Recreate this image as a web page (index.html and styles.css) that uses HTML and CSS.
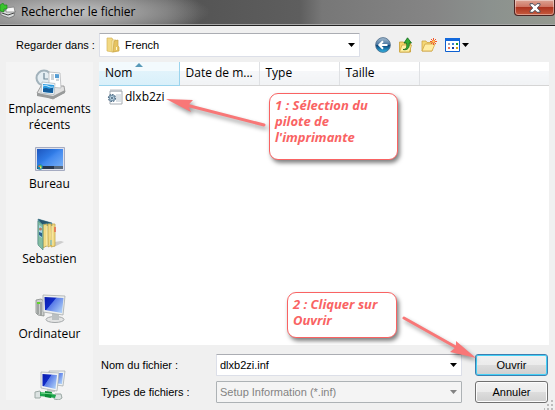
FILE: index.html
```html
<!DOCTYPE html>
<html lang="fr">
<head>
<meta charset="utf-8">
<title>Rechercher le fichier</title>
<link rel="stylesheet" href="styles.css">
</head>
<body>
<div class="dialog">
  <header class="titlebar">
    <svg class="title-icon" width="16" height="16" viewBox="0 0 16 16" aria-hidden="true">
      <path d="M1 9l5-2 9 1-1 5-5 2-8-3z" fill="#d9dcdc" stroke="#666" stroke-width=".7"/>
      <path d="M6 5l8 -1 1 5-9 0z" fill="#f7f7f7" stroke="#777" stroke-width=".7"/>
      <path d="M2 10l6 2 6-2" stroke="#444" fill="none"/>
      <path d="M0 2l3-2 1 2 3 0 0 4-3 0 0 3-4-1z" fill="#39c52c" stroke="#14801a" stroke-width=".6"/>
    </svg>
    <h1>Rechercher le fichier</h1>
    <button class="close" aria-label="Fermer">
      <svg width="12" height="10" viewBox="0 0 12 10"><path d="M1 .7h3l2 2 2-2h3v1.6L8.200 5 11 7.700v1.600H8l-2-2-2 2H1V7.700L3.800 5 1 2.300z" fill="#fff" stroke="#4b4f5c"/></svg>
    </button>
  </header>

  <div class="toolbar">
    <label for="folder">Regarder dans :</label>
    <div class="combo folder">
      <svg width="14" height="16" viewBox="0 0 14 16" aria-hidden="true">
        <path d="M1 1h5l1 2v12l-6-1z" fill="#f2d983" stroke="#d6b65b" stroke-width=".7"/>
        <path d="M6 3h4v11l-4 1z" fill="#fff3bd" stroke="#d9ba60" stroke-width=".7"/>
        <path d="M8 4l4-1v6l1 1v4l-6 1z" fill="#e6c462" stroke="#c9a446" stroke-width=".7"/>
        <path d="M10.500 10v3" stroke="#fff8d0"/>
      </svg>
      <select id="folder"><option>French</option></select>
      <svg class="caret" width="7" height="4" viewBox="0 0 7 4" aria-hidden="true"><path d="M0 0h7L3.500 4z"/></svg>
    </div>
    <nav class="tools">
      <button aria-label="Précédent">
        <svg width="16" height="16" viewBox="0 0 16 16">
          <defs><linearGradient id="orb" x1="0" y1="0" x2="0" y2="1"><stop offset="0" stop-color="#a9bfd3"/><stop offset=".48" stop-color="#47749f"/><stop offset=".52" stop-color="#0c4479"/><stop offset="1" stop-color="#32b7e8"/></linearGradient></defs>
          <circle cx="8" cy="8" r="7.400" fill="url(#orb)" stroke="#4c6b88" stroke-width=".8"/>
          <path d="M12.500 8H4.500M8 4.300L4.300 8 8 11.700" fill="none" stroke="#fff" stroke-width="2"/>
        </svg>
      </button>
      <button aria-label="Dossier parent">
        <svg width="16" height="16" viewBox="0 0 16 16">
          <path d="M1.500 5h4l1 1h6v9h-11z" fill="#f3d46c" stroke="#c69c31" stroke-width=".8"/>
          <path d="M1.500 15L4 8h9.500l-2 7z" fill="#fff0a5" stroke="#cda63e" stroke-width=".8"/>
          <path d="M5 12.500c4 0 4-3 3.500-6.500H6L9.500.8 13.500 6h-2.300c.6 5-1.700 7.500-6.200 6.500z" fill="#35ac35" stroke="#11681b" stroke-width=".8"/>
        </svg>
      </button>
      <button aria-label="Nouveau dossier">
        <svg width="16" height="16" viewBox="0 0 16 16">
          <path d="M1 4h4l1 1.500h5v8.500H1z" fill="#f4d776" stroke="#cfa545" stroke-width=".8"/>
          <path d="M1 14l3-7h10l-3 7z" fill="#ffeda4" stroke="#cfa545" stroke-width=".8"/>
          <path d="M12.500 1v7M9 4.500h7M10 2l5 5M15 2l-5 5" stroke="#f25a2b"/>
          <circle cx="12.500" cy="4.500" r="1.300" fill="#ffd15c"/>
        </svg>
      </button>
      <button class="views" aria-label="Affichage">
        <svg width="24" height="14" viewBox="0 0 24 14">
          <path d="M.5.500h14v13H.5z" fill="#fff" stroke="#0c5fd0"/><path d="M0 0h15v3H0z" fill="#1369dc"/>
          <path d="M3 5h2v2H3z" fill="#a0a0b8"/><path d="M7 5h2v2H7z" fill="#3c80d8"/><path d="M11 5h2v2h-2z" fill="#1c9a30"/>
          <path d="M3 9h2v2H3z" fill="#e97458"/><path d="M7 9h2v2H7z" fill="#173b99"/><path d="M11 9h2v2h-2z" fill="#d8a018"/>
          <path d="M17 5h7l-3.500 4z"/>
        </svg>
      </button>
    </nav>
  </div>

  <div class="body">
    <nav class="places">
      <a href="#recent">
        <svg width="32" height="32" viewBox="0 0 32 32" aria-hidden="true">
          <circle cx="10" cy="10" r="7.500" fill="#e4edf2" stroke="#a2b2bb" stroke-width="2"/>
          <path d="M10 5v6h4" fill="none" stroke="#6f8796" stroke-width="1.200"/>
          <path d="M3 25l4-7 23 0 1 6-12 7z" fill="#e1e1e1" stroke="#8c8c8c" stroke-width=".8"/>
          <path d="M3 25l16 3v3L3 28zM19 28l12-6v3l-12 6z" fill="#999b9b"/>
          <path d="M15 4l11 1 1 15-12-1z" fill="#fff" stroke="#b6b9bb" stroke-width=".8"/>
          <path d="M17 7h3M17 9h3M17 11h3M22 12h3" stroke="#9baab5"/><path d="M21 6l4 .300v4l-4-.300z" fill="#559dd4"/>
          <path d="M8 14l13 1.500-1 11L7 25z" fill="#f7fbff" stroke="#a6b1b7" stroke-width=".7"/>
          <path d="M9 16l11 1-1 8-10-1z" fill="#2b9be1"/><path d="M9 21c4-3 5 2 10-2v6l-10-1z" fill="#155d9c"/><path d="M9 18c4-2 6 2 10 1" stroke="#cfefff" fill="none"/>
        </svg>
        <span>Emplacements récents</span>
      </a>
      <a href="#bureau">
        <svg width="32" height="32" viewBox="0 0 32 32" aria-hidden="true">
          <defs><linearGradient id="desk" x1="0" y1="0" x2="1" y2="1"><stop offset="0" stop-color="#1d55bd"/><stop offset=".4" stop-color="#2f7ae5"/><stop offset=".5" stop-color="#4289ef"/><stop offset="1" stop-color="#7eb5f8"/></linearGradient></defs>
          <path d="M1.500 4.500h29v23h-29z" fill="#dce0ec" stroke="#a5abc1"/>
          <path d="M3 6h26v20H3z" fill="url(#desk)"/><path d="M3 23h26v3H3z" fill="#27374f"/><path d="M20 23h9v3h-9z" fill="#59697c"/>
          <circle cx="6" cy="24" r="2.800" fill="#1685ac"/><path d="M4.500 22.500H6V24H4.500z" fill="#ed713d"/><path d="M6 22.500h1.500V24H6z" fill="#99dc4f"/><path d="M6 24h1.500v1.500H6z" fill="#ffdf55"/>
        </svg>
        <span>Bureau</span>
      </a>
      <a href="#sebastien">
        <svg width="32" height="32" viewBox="0 0 32 32" aria-hidden="true">
          <path d="M20 29l10-5-3-1-7 1z" fill="#cdcdcd"/>
          <path d="M4 1l14 4v22L7 29l-3-3z" fill="#4d94a5" stroke="#5a899a" stroke-width=".6"/>
          <path d="M4 1l14 4-10 1z" fill="#28566d"/>
          <path d="M9 7l4-1 1 21-5 3zM14 6l3 0 1 21-4 2zM18 6l3 0v22l-4 1z" fill="#f2db83" stroke="#c3a54c" stroke-width=".8"/>
          <path d="M13 8v20M18 8v19" stroke="#fff5bd"/>
          <path d="M21 9v5" stroke="#e9684d" stroke-width="1.500"/><path d="M17 22v5" stroke="#57b5d8"/>
          <path d="M4 3l5 4v25l-5-5z" fill="#83bda2" stroke="#538e85" stroke-width=".7"/>
          <path d="M5 7l3 2v11l-3-2z" fill="#a9d8e8"/><circle cx="6.500" cy="11" r="1.500" fill="#b37d62"/><path d="M5 14l3 1v4l-3-2z" fill="#2b628d"/>
        </svg>
        <span>Sebastien</span>
      </a>
      <a href="#ordinateur">
        <svg width="32" height="32" viewBox="0 0 32 32" aria-hidden="true">
          <defs><linearGradient id="screen" x1="0" y1="0" x2="1" y2=".7"><stop offset="0" stop-color="#0a1bac"/><stop offset=".42" stop-color="#102bc6"/><stop offset=".46" stop-color="#597be7"/><stop offset="1" stop-color="#a7c9f6"/></linearGradient></defs>
          <path d="M2 7l5-1 3 2v15l-6-1-2-2z" fill="#cccfcd" stroke="#868b89" stroke-width=".8"/><path d="M4 9v12M7 9v13" stroke="#737977"/><path d="M3 10h3" stroke="#62d32d" stroke-width="2"/>
          <ellipse cx="21" cy="26.500" rx="9" ry="3" fill="#e3e4e4" stroke="#a4a8aa"/><path d="M18 20l7 1v6h-7z" fill="#bbc0c2"/>
          <path d="M9 2l22 1-2 19-20-3z" fill="#eceeed" stroke="#a7acad" stroke-width=".8"/><path d="M10.500 4l19 1-1.500 15-17-3z" fill="url(#screen)"/>
        </svg>
        <span>Ordinateur</span>
      </a>
      <a href="#reseau" aria-label="Réseau">
        <svg width="32" height="32" viewBox="0 0 32 32" aria-hidden="true">
          <path d="M15 3l16 0-2 15-13-2z" fill="#edf1f2" stroke="#a0a7aa" stroke-width=".7"/><path d="M17 5l12 0-1 11-10-1z" fill="url(#screen)"/>
          <path d="M13 18l8 2v4h-8z" fill="#c9cccc"/><path d="M7 4l18 1-2 18-16-3z" fill="#f2f4f4" stroke="#a4aaac" stroke-width=".7"/><path d="M8.500 6l14.500 1-1.500 14-13-3z" fill="url(#screen)"/>
          <path d="M1 24l5-1 2 3-2 4-5 0zM21 26l6 0 1 4-3 2-5-1z" fill="#dce3e2" stroke="#9ca9a5"/>
          <path d="M6 24l9 1 7 2-1 3-15-2z" fill="#1da64c"/><path d="M11 23l7 1-1 6-6-1z" fill="#0c8b36"/><path d="M7 25l12 1" stroke="#79dc91"/>
        </svg>
      </a>
    </nav>

    <main>
      <div class="list">
        <table>
          <colgroup><col class="col"><col class="col"><col class="col"><col class="col"><col></colgroup>
          <thead><tr><th class="sorted">Nom<svg width="8" height="4" viewBox="0 0 8 4" aria-hidden="true"><path d="M0 4h8L4 0z" fill="#5899b8"/></svg></th><th>Date de m...</th><th>Type</th><th>Taille</th><th></th></tr></thead>
          <tbody><tr><td colspan="5"><div class="file">
            <svg width="16" height="16" viewBox="0 0 16 16" aria-hidden="true">
              <path d="M3 2h12v13H3z" fill="#fff" stroke="#a6adb4"/><path d="M4 0v3M6 0v3M8 0v3M10 0v3M12 0v3M14 0v3" stroke="#a9afb5" stroke-width=".8"/>
              <path d="M9 6h5M9 8h5M9 10h5M9 12h5" stroke="#b8c4ce"/>
              <circle cx="5" cy="9" r="3.300" fill="#c4dbe9" stroke="#54718a" stroke-width="1.600" stroke-dasharray="1.700 .8"/><circle cx="5" cy="9" r="2.600" fill="#b9d0df" stroke="#7694aa"/><circle cx="5" cy="9" r="1" fill="#49667d"/>
            </svg>dlxb2zi</div></td></tr></tbody>
        </table>
      </div>

      <form class="fields">
        <label for="name">Nom du fichier :</label>
        <div class="combo"><input id="name" type="text" value="dlxb2zi.inf"><svg class="caret" width="7" height="4" viewBox="0 0 7 4" aria-hidden="true"><path d="M0 0h7L3.500 4z"/></svg></div>
        <button class="push default" type="button">Ouvrir</button>
        <label for="type">Types de fichiers :</label>
        <div class="combo disabled"><select id="type" disabled><option>Setup Information (*.inf)</option></select><svg class="caret" width="7" height="4" viewBox="0 0 7 4" aria-hidden="true"><path d="M0 0h7L3.500 4z"/></svg></div>
        <button class="push" type="button">Annuler</button>
      </form>

      <p class="callout pick">1 : Sélection du pilote de l'imprimante</p>
      <svg class="arrow arrow-pick" width="104" height="32" viewBox="0 0 104 32" aria-hidden="true"><path d="M20 7L98 27" stroke="#f87777" stroke-width="3" stroke-linecap="round"/><path d="M0 1L27 2 22 7.500 25 14z" fill="#f87777"/></svg>
      <p class="callout open">2 : Cliquer sur Ouvrir</p>
      <svg class="arrow arrow-open" width="76" height="44" viewBox="0 0 76 44" aria-hidden="true"><path d="M3 3L60 35" stroke="#f87777" stroke-width="3" stroke-linecap="round"/><path d="M75 43L55 26 55 32 49 37z" fill="#f87777"/></svg>
    </main>
  </div>
  <svg class="grip" width="10" height="10" viewBox="0 0 10 10" aria-hidden="true"><path d="M7 0h2v2H7zM7 4h2v2H7zM7 8h2v2H7zM3 4h2v2H3zM3 8h2v2H3zM0 8h1v2H0z" fill="#bcbcbc"/></svg>
</div>
</body>
</html>
```
FILE: styles.css
```css
* {
  box-sizing: border-box;
}

body {
  margin: 0;
  background: #f0f0f0;
  color: #000;
  font: 12px/16px "Open Sans", sans-serif;
}

button,
input,
select {
  margin: 0;
  padding: 0;
  border: 0;
  background: none;
  color: inherit;
  font: inherit;
}

svg {
  display: block;
  flex: none;
}

.dialog {
  position: relative;
  display: flex;
  flex-direction: column;
  min-height: 100vh;
}

.titlebar {
  display: flex;
  gap: 5px;
  height: 26px;
  overflow: hidden;
  border-bottom: 1px solid #222;
  box-shadow: inset 0 -1px #a8a8a8;
  background:
    radial-gradient(ellipse 140px 26px at 70px 12px, #c4c4c4 0%, #a9a9a9cc 45%, transparent 100%),
    linear-gradient(90deg, #777 0%, #666 30%, #555 36%, #5e5e5e 54%, #777 58%, #858585 78%, #8b918e 88%, #949990 100%);
}

.title-icon {
  margin-top: 3px;
}

h1 {
  flex: 1;
  margin: 0;
  font-size: 12px;
  font-weight: 400;
  line-height: 24px;
}

.close {
  display: flex;
  justify-content: center;
  align-items: center;
  width: 41px;
  height: 16px;
  border: 1px solid #4b2422;
  border-top: 0;
  border-radius: 0 0 4px 4px;
  background: linear-gradient(#dca393, #cf7664 45%, #ad3520 50%, #c65b3f);
  box-shadow: inset 0 0 0 1px #ffffff66;
}

.toolbar {
  display: flex;
  align-items: center;
  padding: 7px 6px 0 16px;
  font-family: "Liberation Sans", sans-serif;
  font-size: 11px;
}

.toolbar label {
  width: 83px;
}

.combo {
  display: flex;
  align-items: center;
  height: 22px;
  min-width: 0;
  padding: 0 4px 0 3px;
  border: 1px solid #dcdfe8;
  border-top-color: #abadb3;
  border-radius: 1px;
  background: #fff;
}

.combo input,
.combo select {
  flex: 1;
  min-width: 0;
  height: 20px;
  appearance: none;
  outline: 0;
  opacity: 1;
}

.folder {
  flex: 1;
  height: 24px;
  gap: 5px;
  padding-left: 6px;
}

.tools {
  display: flex;
  align-items: center;
  gap: 7px;
  width: 189px;
  padding-left: 15px;
}

.views {
  margin-left: 1px;
}

.body {
  display: flex;
  flex: 1;
  gap: 6px;
  padding: 5px 6px 7px;
}

.places {
  width: 87px;
  margin-bottom: 3px;
  padding-top: 6px;
  background: #f4f4f4;
}

.places a {
  display: flex;
  flex-direction: column;
  align-items: center;
  gap: 1px;
  min-height: 75px;
  color: #000;
  text-align: center;
  text-decoration: none;
}

.places a:last-child {
  min-height: 0;
}

main {
  position: relative;
  display: flex;
  flex: 1;
  flex-direction: column;
  gap: 9px;
  min-width: 0;
}

.list {
  flex: 1;
  background: #fff;
}

table {
  width: 100%;
  table-layout: fixed;
  border-collapse: collapse;
}

.col {
  width: 80px;
}

th {
  position: relative;
  height: 23px;
  padding: 0 0 0 6px;
  border-right: 1px solid #dfe1e4;
  border-bottom: 1px solid #d5d5d5;
  background: linear-gradient(#fff 40%, #f6f7f9 41%, #f1f3f5);
  font-weight: 400;
  text-align: left;
  white-space: nowrap;
}

th:last-child {
  border-right: 0;
}

.sorted {
  border-color: #9bd4ed;
  background: linear-gradient(#f3fafd 40%, #e1f3fb 41%, #d9f0fa);
}

.sorted svg {
  position: absolute;
  top: 1px;
  left: 36px;
}

td {
  padding: 3px 8px;
}

.file {
  display: flex;
  gap: 2px;
}

.fields {
  display: grid;
  grid-template-columns: 115px 1fr 73px;
  row-gap: 5px;
  align-items: center;
  padding: 0 1px 0 2px;
  font-family: "Liberation Sans", sans-serif;
  font-size: 11px;
}

.fields .combo {
  margin-right: 13px;
}

.fields .disabled {
  border-color: #adb2b5;
  background: #f4f4f4;
  color: #838383;
  fill: #838383;
}

.push {
  height: 22px;
  border: 1px solid #707070;
  border-radius: 3px;
  background: linear-gradient(#f2f2f2, #ebebeb 49%, #dddddd 50%, #cfcfcf);
  box-shadow: inset 0 0 0 1px #fcfcfc;
}

.default {
  border-color: #3c7fb1;
  box-shadow: inset 0 0 0 1px #45d0f6;
}

.callout {
  position: absolute;
  margin: 0;
  padding: 3px 5px;
  border: 1px solid #f96363;
  border-radius: 9px;
  background: #fff;
  box-shadow: 2px 3px 4px #00000080;
  color: #f96363;
  font-size: 13px;
  font-weight: 700;
  font-style: italic;
}

.pick {
  top: 31px;
  left: 170px;
  width: 129px;
  min-height: 67px;
}

.open {
  right: 152px;
  bottom: 65px;
  width: 110px;
  min-height: 46px;
}

.arrow {
  position: absolute;
  overflow: visible;
  filter: drop-shadow(2px 3px 2px #00000066);
  pointer-events: none;
}

.arrow-pick {
  top: 36px;
  left: 67px;
}

.arrow-open {
  right: 72px;
  bottom: 44px;
}

.grip {
  position: absolute;
  right: 1px;
  bottom: 0;
}
```
